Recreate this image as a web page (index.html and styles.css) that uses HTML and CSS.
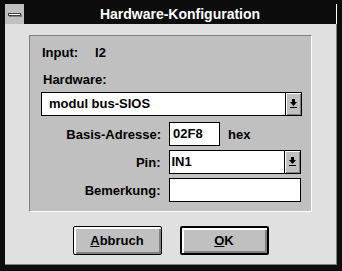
FILE: index.html
```html
<!DOCTYPE html>
<html lang="de">
<head>
  <meta charset="UTF-8">
  <title>Hardware-Konfiguration</title>
  <link rel="stylesheet" href="styles.css">
</head>
<body>
  <div class="window">
    <!-- Title bar -->
    <div class="titlebar">
      <div class="sysmenu"><span class="sysbar"></span></div>
      <div class="title">Hardware-Konfiguration</div>
    </div>

    <div class="client">
      <!-- Settings group -->
      <div class="group">
        <div class="line">Input:<span class="value">I2</span></div>
        <div class="line hw-label">Hardware:</div>
        <div class="combo wide">
          <span class="combo-text pad-wide">modul bus-SIOS</span>
          <span class="drop"><svg width="9" height="10" viewBox="0 0 9 10"><path d="M3 0h3v3h2l-3.5 4-3.5-4h2z" fill="#000"/><rect x="1" y="8" width="7" height="1" fill="#000"/></svg></span>
        </div>

        <div class="row first">
          <label class="lbl">Basis-Adresse:</label>
          <div class="field short">02F8</div>
          <span class="unit">hex</span>
        </div>
        <div class="row">
          <label class="lbl">Pin:</label>
          <div class="combo narrow">
            <span class="combo-text">IN1</span>
            <span class="drop"><svg width="9" height="10" viewBox="0 0 9 10"><path d="M3 0h3v3h2l-3.5 4-3.5-4h2z" fill="#000"/><rect x="1" y="8" width="7" height="1" fill="#000"/></svg></span>
          </div>
        </div>
        <div class="row">
          <label class="lbl">Bemerkung:</label>
          <div class="field long"></div>
        </div>
      </div>

      <!-- Buttons -->
      <div class="buttons">
        <button class="btn"><u>A</u>bbruch</button>
        <button class="btn default"><u>O</u>K</button>
      </div>
    </div>
  </div>
</body>
</html>
```

FILE: styles.css
```css
body {
  margin: 0;
  background-color: #0c0c0c;
  font-family: "Liberation Sans", Arial, sans-serif;
  font-weight: bold;
  font-size: 13px;
  color: #000;
}
.window {
  width: 342px;
  height: 271px;
  box-sizing: border-box;
  padding: 4px 5px 6px 5px;
  background-color: #0c0c0c;
  display: flex;
  flex-direction: column;
}
.titlebar {
  height: 20px;
  display: flex;
}
.sysmenu {
  width: 19px;
  background-color: #c0c0c0;
  display: flex;
  align-items: center;
  justify-content: center;
}
.sysbar {
  width: 11px;
  height: 1px;
  background-color: #fff;
  border: 1px solid #404040;
  box-shadow: 1px 1px 0 #808080;
}
.title {
  flex: 1;
  color: #fff;
  text-align: center;
  font-size: 14px;
  line-height: 20px;
  border-right: 1px solid #fff;
}
.client {
  flex: 1;
  background-color: #e0e0e0;
  border-right: 1px solid #808080;
  border-bottom: 1px solid #808080;
  padding: 11px 0 0 24px;
}
.group {
  width: 283px;
  box-sizing: border-box;
  background-color: #c0c0c0;
  border: 1px solid;
  border-color: #808080 #fff #fff #808080;
  padding: 9px 10px 9px 11px;
}
.line {
  line-height: 16px;
  padding-left: 1px;
}
.value {
  margin-left: 17px;
}
.hw-label {
  margin-top: 11px;
  padding-left: 2px;
}
.combo {
  height: 24px;
  box-sizing: border-box;
  border: 1px solid #000;
  background-color: #fff;
  display: flex;
}
.combo.wide {
  margin-top: 4px;
  width: 261px;
}
.combo.narrow {
  width: 133px;
}
.combo-text {
  flex: 1;
  line-height: 22px;
  padding-left: 2px;
}
.combo-text.pad-wide {
  padding-left: 7px;
}
.drop {
  width: 15px;
  border-left: 1px solid #000;
  background-color: #c0c0c0;
  box-shadow: inset 1px 1px 0 #fff, inset -1px -1px 0 #808080;
  display: flex;
  align-items: center;
  justify-content: center;
}
.row {
  display: flex;
  align-items: center;
  margin-top: 4px;
}
.row.first {
  margin-top: 6px;
}
.lbl {
  width: 131px;
  margin-left: -11px;
  margin-right: 8px;
  text-align: right;
}
.field {
  height: 24px;
  box-sizing: border-box;
  border: 1px solid #000;
  background-color: #fff;
  line-height: 22px;
  padding-left: 3px;
}
.field.short {
  width: 51px;
}
.field.long {
  width: 133px;
}
.unit {
  margin-left: 8px;
}
.buttons {
  width: 331px;
  margin-left: -24px;
  margin-top: 14px;
  display: flex;
  justify-content: center;
  gap: 18px;
}
.btn {
  width: 89px;
  height: 29px;
  font-family: "Liberation Sans", Arial, sans-serif;
  font-weight: bold;
  font-size: 13px;
  color: #000;
  background-color: #c0c0c0;
  border: 1px solid #000;
  border-radius: 2px;
  box-shadow: inset 1px 1px 0 #fff, inset 2px 2px 0 #fff, inset -1px -1px 0 #808080, inset -2px -2px 0 #808080;
  padding: 0;
}
.btn.default {
  border-width: 2px;
}
```
